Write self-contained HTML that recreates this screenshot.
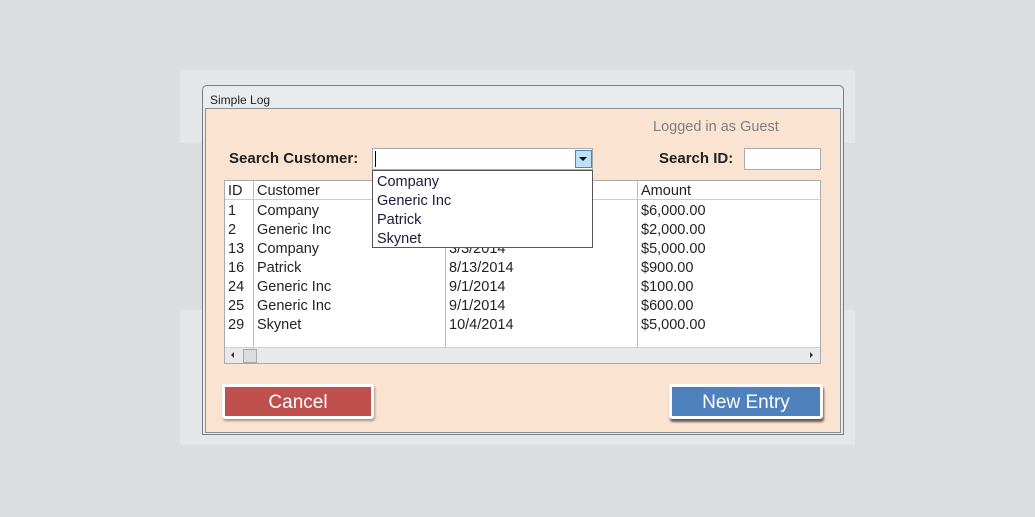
<!DOCTYPE html>
<html><head><style>
*{margin:0;padding:0;box-sizing:border-box}
body{width:1035px;height:517px;background:#dadee1;position:relative;overflow:hidden;font-family:"Liberation Sans",Arial,sans-serif;color:#222}
.a{position:absolute}
.row{position:absolute;left:0;width:597px;height:19px;font-size:14.5px;line-height:21px}
.row span{position:absolute;top:0}
.btn{position:absolute;border:3px solid #fff;color:#fff;font-size:19px;text-align:center;line-height:32px;box-shadow:1px 2px 2px rgba(0,0,0,.35);border-radius:3px}
</style></head><body>
<div class="a" style="left:180px;top:70px;width:675px;height:73px;background:#e4e7ea"></div>
<div class="a" style="left:180px;top:310px;width:675px;height:135px;background:#e4e7ea"></div>
<div class="a" style="left:202px;top:85px;width:642px;height:350px;border:1px solid #777c82;border-radius:5px 5px 0 0;background:#e9ebee"></div>
<div class="a" style="left:210px;top:93px;font-size:12px;color:#222">Simple Log</div>
<div class="a" style="left:205px;top:108px;width:636px;height:325px;background:#fbe3d2;border:1px solid #8a8f95"></div>
<div class="a" style="left:653px;top:119px;font-size:14.5px;color:#7f7f7f">Logged in as Guest</div>
<div class="a" style="left:229px;top:150px;font-size:15px;font-weight:bold">Search Customer:</div>
<div class="a" style="left:372px;top:148px;width:221px;height:22px;background:#fff;border:1px solid #aaa"></div>
<div class="a" style="left:375px;top:151px;width:1px;height:16px;background:#000"></div>
<div class="a" style="left:575px;top:150px;width:17px;height:18px;background:#bde0f7;border:1px solid #4b86b4"></div>
<div class="a" style="left:579px;top:157px;width:0;height:0;border-left:4px solid transparent;border-right:4px solid transparent;border-top:4px solid #000"></div>
<div class="a" style="left:659px;top:150px;font-size:15px;font-weight:bold">Search ID:</div>
<div class="a" style="left:744px;top:148px;width:77px;height:22px;background:#fff;border:1px solid #aaa"></div>
<div class="a" style="left:224px;top:180px;width:597px;height:184px;background:#fff;border:1px solid #aaa">
 <div class="a" style="left:28px;top:0;width:1px;height:167px;background:#bbb"></div>
 <div class="a" style="left:220px;top:0;width:1px;height:167px;background:#bbb"></div>
 <div class="a" style="left:412px;top:0;width:1px;height:167px;background:#bbb"></div>
 <div class="a" style="left:0;top:18px;width:597px;height:1px;background:#ccc"></div>
 <div class="row" style="top:0"><span style="left:3px">ID</span><span style="left:32px">Customer</span><span style="left:416px">Amount</span></div>
 <div class="row" style="top:20px"><span style="left:3px">1</span><span style="left:32px">Company</span><span style="left:416px">$6,000.00</span></div>
 <div class="row" style="top:39px"><span style="left:3px">2</span><span style="left:32px">Generic Inc</span><span style="left:416px">$2,000.00</span></div>
 <div class="row" style="top:58px"><span style="left:3px">13</span><span style="left:32px">Company</span><span style="left:224px">3/3/2014</span><span style="left:416px">$5,000.00</span></div>
 <div class="row" style="top:77px"><span style="left:3px">16</span><span style="left:32px">Patrick</span><span style="left:224px">8/13/2014</span><span style="left:416px">$900.00</span></div>
 <div class="row" style="top:96px"><span style="left:3px">24</span><span style="left:32px">Generic Inc</span><span style="left:224px">9/1/2014</span><span style="left:416px">$100.00</span></div>
 <div class="row" style="top:115px"><span style="left:3px">25</span><span style="left:32px">Generic Inc</span><span style="left:224px">9/1/2014</span><span style="left:416px">$600.00</span></div>
 <div class="row" style="top:134px"><span style="left:3px">29</span><span style="left:32px">Skynet</span><span style="left:224px">10/4/2014</span><span style="left:416px">$5,000.00</span></div>
 <div class="a" style="left:0;top:166px;width:595px;height:16px;background:#e8e9eb;border-top:1px solid #d0d0d0"></div>
 <div class="a" style="left:6px;top:171px;border-top:3px solid transparent;border-bottom:3px solid transparent;border-right:3px solid #333"></div>
 <div class="a" style="left:585px;top:171px;border-top:3px solid transparent;border-bottom:3px solid transparent;border-left:3px solid #333"></div>
 <div class="a" style="left:18px;top:168px;width:14px;height:14px;background:#dcdcdc;border:1px solid #a8a8a8"></div>
</div>
<div class="a" style="left:372px;top:170px;width:221px;height:78px;background:#fff;border:1px solid #555;font-size:14.5px;line-height:19px;color:#1a1a3a;padding-left:4px;padding-top:2px">Company<br>Generic Inc<br>Patrick<br>Skynet</div>
<div class="btn" style="left:222px;top:384px;width:152px;height:35px;background:#c0504d">Cancel</div>
<div class="btn" style="left:669px;top:384px;width:154px;height:35px;background:#4f81bd;box-shadow:1px 3px 2px rgba(0,0,0,.6)">New Entry</div>
</body></html>
